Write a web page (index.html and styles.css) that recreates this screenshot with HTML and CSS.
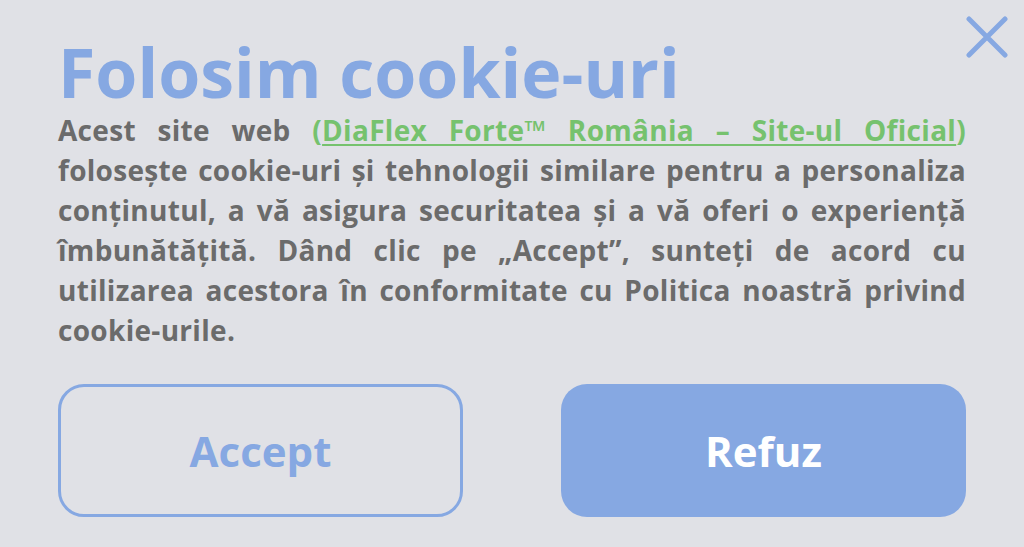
FILE: index.html
```html
<!DOCTYPE html>
<html lang="ro">
<head>
    <meta charset="UTF-8">
    <meta name="viewport" content="width=device-width, initial-scale=1.0">
    <title>Cookie-uri</title>
    <link rel="stylesheet" href="styles.css">
</head>
<body>
    <div class="cookie-box">
        <!-- Close button -->
        <button class="close-btn" aria-label="Închide">
            <svg width="42" height="42" viewBox="0 0 42 42">
                <path d="M3 3 L39 39 M39 3 L3 39" stroke="#86a8e2" stroke-width="5" stroke-linecap="round" fill="none"/>
            </svg>
        </button>

        <h1 class="title">Folosim cookie-uri</h1>
        <p class="text">
            Acest site web <span class="site">(<a href="#">DiaFlex Forte™ România – Site-ul Oficial</a>)</span>
            folosește cookie-uri și tehnologii similare pentru a personaliza conținutul, a vă asigura securitatea și a vă oferi o experiență îmbunătățită. Dând clic pe „Accept”, sunteți de acord cu utilizarea acestora în conformitate cu Politica noastră privind cookie-urile.
        </p>

        <div class="actions">
            <button class="btn btn-outline">Accept</button>
            <button class="btn btn-fill">Refuz</button>
        </div>
    </div>
</body>
</html>
```

FILE: styles.css
```css
body {
    font-family: "Open Sans", "Noto Sans", sans-serif;
    background-color: #e0e1e6;
    margin: 0;
    padding: 0;
}

.cookie-box {
    position: relative;
    padding: 36px 58px 0 58px;
    height: 511px;
}

.close-btn {
    position: absolute;
    top: 16px;
    right: 16px;
    background: none;
    border: none;
    padding: 0;
    cursor: pointer;
}

.title {
    font-size: 68px;
    font-weight: 700;
    color: #86a8e2;
    margin: 0;
    line-height: 72px;
}

.text {
    font-size: 28px;
    font-weight: 700;
    letter-spacing: 0.3px;
    color: #6b6b6b;
    line-height: 40px;
    text-align: justify;
    margin: 2px 0 0 0;
}

.site {
    color: #76c26e;
}

.site a {
    color: #76c26e;
    text-decoration: underline;
    text-decoration-thickness: 2px;
    text-underline-offset: 3px;
}

.actions {
    display: flex;
    justify-content: space-between;
    margin-top: 34px;
}

.btn {
    width: 405px;
    height: 133px;
    border-radius: 26px;
    font-family: inherit;
    font-size: 42px;
    font-weight: 700;
    cursor: pointer;
}

.btn-outline {
    background: transparent;
    border: 3px solid #86a8e2;
    color: #86a8e2;
}

.btn-fill {
    background: #86a8e2;
    border: none;
    color: #ffffff;
}
```
